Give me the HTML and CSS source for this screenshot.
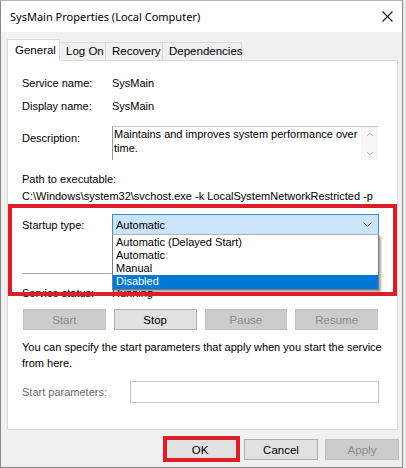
FILE: index.html
```html
<!DOCTYPE html>
<html lang="en">
<head>
    <meta charset="UTF-8">
    <title>SysMain Properties (Local Computer)</title>
    <link rel="stylesheet" href="styles.css">
</head>
<body>

    <div class="window">
        <div class="titlebar">
            <span class="title">SysMain Properties (Local Computer)</span>
            <svg class="close" width="11" height="11" viewBox="0 0 11 11">
                <path d="M0.5 0.5 L10.5 10.5 M10.5 0.5 L0.5 10.5" stroke="#111" stroke-width="1.1" fill="none"/>
            </svg>
        </div>

        <div class="tabs">
            <div class="tab selected">General</div>
            <div class="tab">Log On</div>
            <div class="tab">Recovery</div>
            <div class="tab">Dependencies</div>
        </div>

        <div class="panel">
            <div class="row row-name">
                <span class="label">Service name:</span>
                <span>SysMain</span>
            </div>
            <div class="row row-display">
                <span class="label">Display name:</span>
                <span>SysMain</span>
            </div>
            <div class="row row-desc">
                <span class="label">Description:</span>
                <div class="desc-box">
                    <div class="desc-text">Maintains and improves system performance over time.</div>
                    <div class="desc-scroll">
                        <svg width="8" height="30" viewBox="0 0 8 30">
                            <path d="M1 7 L4 4 L7 7" stroke="#c4c4c4" stroke-width="1" fill="none"/>
                            <path d="M1 23 L4 26 L7 23" stroke="#c4c4c4" stroke-width="1" fill="none"/>
                        </svg>
                    </div>
                </div>
            </div>
            <div class="path-label">Path to executable:</div>
            <div class="path-value">C:\Windows\system32\svchost.exe -k LocalSystemNetworkRestricted -p</div>

            <div class="row row-startup">
                <span class="label">Startup type:</span>
                <div class="combo">
                    <span>Automatic</span>
                    <svg width="9" height="5" viewBox="0 0 9 5">
                        <path d="M0.5 0.5 L4.5 4.5 L8.5 0.5" stroke="#555" stroke-width="1" fill="none"/>
                    </svg>
                </div>
            </div>

            <div class="separator"></div>

            <div class="row row-status">
                <span class="label">Service status:</span>
                <span>Running</span>
            </div>

            <div class="service-buttons">
                <button class="btn disabled">Start</button>
                <button class="btn">Stop</button>
                <button class="btn disabled">Pause</button>
                <button class="btn disabled">Resume</button>
            </div>

            <p class="hint">You can specify the start parameters that apply when you start the service from here.</p>

            <div class="row row-params">
                <span class="label params-label">Start parameters:</span>
                <div class="params-input"></div>
            </div>

            <div class="dropdown">
                <div class="option">Automatic (Delayed Start)</div>
                <div class="option">Automatic</div>
                <div class="option">Manual</div>
                <div class="option active">Disabled</div>
            </div>

            <div class="highlight startup-highlight"></div>
        </div>

        <div class="footer">
            <div class="ok-wrap">
                <button class="btn footer-btn">OK</button>
                <div class="highlight ok-highlight"></div>
            </div>
            <button class="btn footer-btn">Cancel</button>
            <button class="btn footer-btn disabled">Apply</button>
        </div>
    </div>

</body>
</html>
```

FILE: styles.css
```css
body {
    margin: 0;
    padding: 0;
    background: #e9e9e9;
    font-family: 'Liberation Sans', Arial, sans-serif;
    font-size: 11px;
    color: #000;
}

.window {
    width: 401px;
    height: 466px;
    background: #f0f0f0;
    border: 1px solid #8a8a8a;
    border-top-color: #b5b5b5;
    box-sizing: content-box;
}

.titlebar {
    height: 31px;
    background: #fff;
    display: flex;
    align-items: center;
    justify-content: space-between;
    padding: 0 9px 0 9px;
}

.title {
    font-family: 'Noto Sans', sans-serif;
    font-size: 11px;
    margin-top: -1px;
}

.close {
    margin-top: -1px;
}

.tabs {
    display: flex;
    align-items: flex-end;
    padding: 7px 0 0 6px;
    height: 21px;
    position: relative;
    z-index: 2;
}

.tab {
    height: 18px;
    line-height: 17px;
    padding: 0 6px;
    background: #f0f0f0;
    border: 1px solid #d9d9d9;
    border-bottom: none;
    margin-left: -1px;
    font-size: 11.5px;
    white-space: nowrap;
    box-sizing: border-box;
}

.tab:nth-child(2) { width: 47px; }
.tab:nth-child(3) { width: 58px; }
.tab:nth-child(4) { width: 80px; }

.tab.selected {
    width: 53px;
    height: 22px;
    line-height: 21px;
    background: #fff;
    margin-left: 0;
    margin-bottom: -1px;
    padding-left: 7px;
    position: relative;
    z-index: 3;
}

.panel {
    position: relative;
    margin-left: 6px;
    width: 391px;
    height: 370px;
    background: #fff;
    border: 1px solid #d9d9d9;
    box-sizing: border-box;
    padding: 15px 0 0 14px;
    font-size: 11px;
}

.row {
    display: flex;
    align-items: center;
}

.label {
    width: 90px;
    flex-shrink: 0;
}

.row-name,
.row-display {
    height: 14px;
}

.row-display {
    margin-top: 9px;
}

.row-desc {
    margin-top: 13px;
    align-items: flex-start;
}

.row-desc .label {
    padding-top: 6px;
}

.desc-box {
    width: 266px;
    height: 34px;
    display: flex;
    border-top: 1px solid #c8c8c8;
    border-left: 1px solid #9a9a9a;
    box-sizing: border-box;
}

.desc-text {
    flex: 1;
    padding: 0 0 0 1px;
    line-height: 14px;
}

.desc-scroll {
    width: 17px;
    background: #f7f7f7;
    display: flex;
    justify-content: center;
    align-items: center;
}

.path-label {
    margin-top: 12px;
    line-height: 14px;
}

.path-value {
    margin-top: 3px;
    line-height: 14px;
    white-space: nowrap;
}

.row-startup {
    margin-top: 11px;
}

.combo {
    width: 267px;
    height: 21px;
    box-sizing: border-box;
    background: #cce4f7;
    border: 1px solid #3c8fd6;
    display: flex;
    align-items: center;
    justify-content: space-between;
    padding: 0 6px 0 3px;
}

.separator {
    margin-top: 38px;
    width: 356px;
    height: 1px;
    background: #a8a8a8;
}

.row-status {
    margin-top: 12px;
    height: 14px;
}

.service-buttons {
    margin: 9px 0 0 1px;
    display: grid;
    grid-template-columns: repeat(4, 1fr);
    gap: 8px;
    width: 355px;
}

.btn {
    height: 21px;
    font-family: 'Liberation Sans', Arial, sans-serif;
    font-size: 11.5px;
    color: #000;
    background: #e1e1e1;
    border: 1px solid #adadad;
    padding: 0;
}

.btn.disabled {
    background: #cccccc;
    border-color: #bfbfbf;
    color: #8a8a8a;
}

.hint {
    margin: 9px 0 0 0;
    width: 360px;
    line-height: 16px;
}

.row-params {
    margin-top: 10px;
}

.params-label {
    width: 108px;
    color: #6d6d6d;
}

.params-input {
    width: 249px;
    height: 22px;
    border: 1px solid #c8c8c8;
    box-sizing: border-box;
}

.dropdown {
    position: absolute;
    left: 104px;
    top: 173px;
    width: 267px;
    border: 1px solid #7a7a7a;
    border-top-color: #b0b0b0;
    background: #fff;
    box-sizing: border-box;
    padding-top: 1px;
    box-shadow: 2px 2px 2px rgba(0, 0, 0, 0.35);
}

.option {
    height: 13px;
    line-height: 13px;
    padding-left: 3px;
    font-size: 11px;
}

.option.active {
    background: #0078d7;
    color: #fff;
    height: 14px;
}

.highlight {
    position: absolute;
    border: 4px solid #dc1e2b;
    box-sizing: border-box;
}

.startup-highlight {
    left: 0px;
    top: 143px;
    width: 389px;
    height: 92px;
}

.footer {
    display: flex;
    justify-content: flex-end;
    gap: 7px;
    padding: 9px 3px 0 0;
}

.footer-btn {
    width: 74px;
}

.ok-wrap {
    position: relative;
    display: flex;
}

.ok-highlight {
    left: 0;
    top: -3px;
    width: 77px;
    height: 26px;
}
```
